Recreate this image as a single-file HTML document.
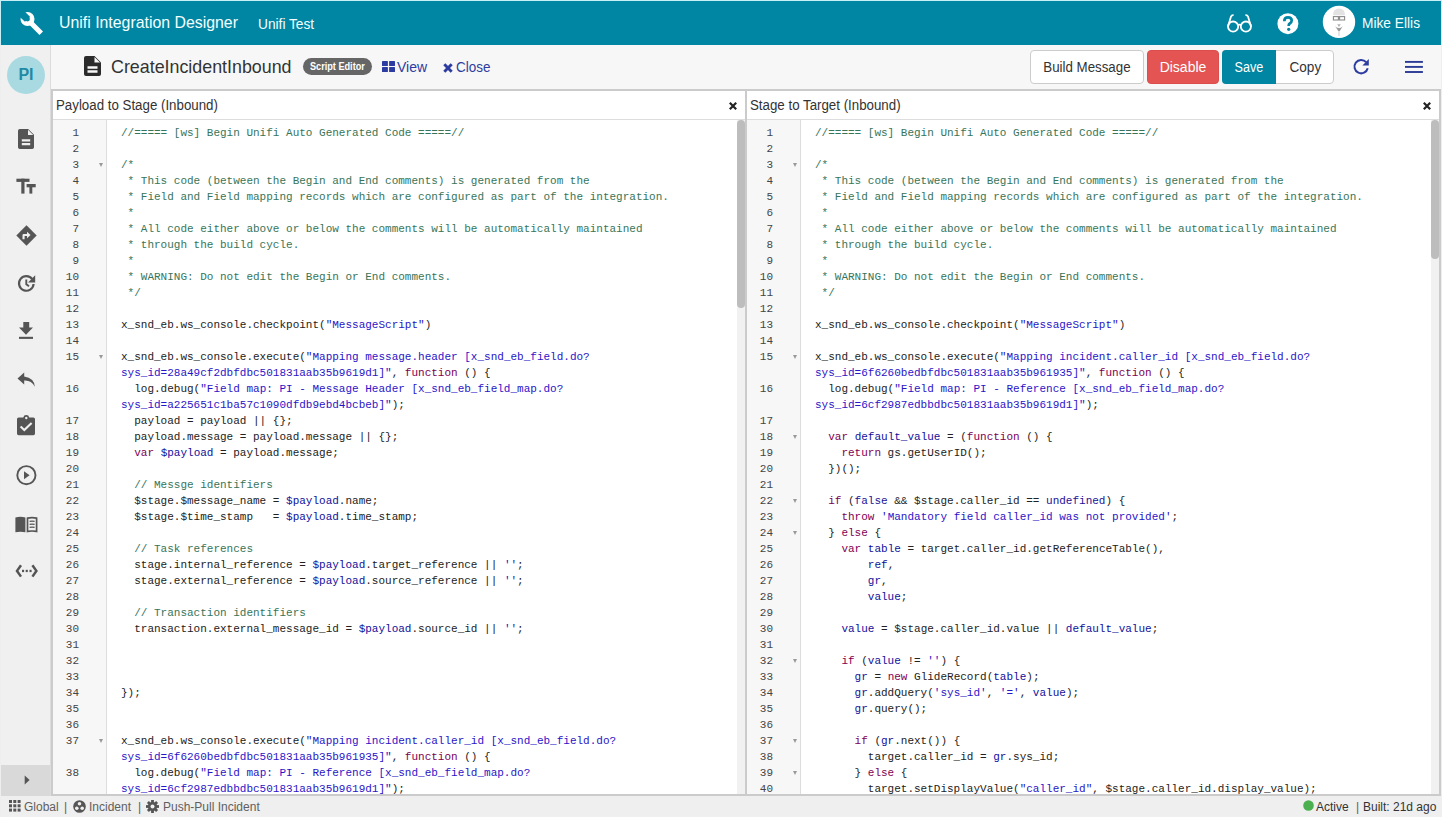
<!DOCTYPE html>
<html><head><meta charset="utf-8">
<style>
*{margin:0;padding:0;box-sizing:border-box}
html,body{width:1442px;height:817px;overflow:hidden}
body{position:relative;background:#eeeeee;font-family:"Liberation Sans",sans-serif;color:#333}
.abs{position:absolute}
#hdr{position:absolute;left:1px;top:1px;width:1440px;height:44px;background:#0085a3;color:#fff}
#hdr .t1{position:absolute;left:58px;top:12px;font-size:17px;white-space:nowrap;color:#f4ffff;transform:scaleX(0.933);transform-origin:0 0}
#hdr .t2{position:absolute;left:257px;top:15px;font-size:14px;white-space:nowrap;color:#f4ffff;transform:scaleX(0.98);transform-origin:0 0}
#hdr .user{position:absolute;left:1361px;top:13px;font-size:15px;white-space:nowrap;color:#f4ffff;transform:scaleX(0.916);transform-origin:0 0}
#side{position:absolute;left:1px;top:45px;width:50px;height:751px;background:#f0f0f0;border-right:1px solid #dcdcdc}
#side .exp{position:absolute;left:0;top:720px;width:49px;height:31px;background:#d9d9d9}
#tool{position:absolute;left:51px;top:45px;width:1390px;height:44px;background:#f7f7f7}
.btn{position:absolute;top:50px;height:34px;font-size:14px;line-height:32px;text-align:center;white-space:nowrap}
.pb{position:absolute;background:#cbcbcb}
.ph{position:absolute;top:91px;height:29px;background:#fff;border-bottom:1px solid #dddddd}
.ph .tt{position:absolute;left:3px;top:6px;font-size:14px;color:#333;white-space:nowrap;transform:scaleX(0.95);transform-origin:0 0}
.gut{position:absolute;top:120px;height:674px;background:#f7f7f7;border-right:1px solid #dddddd;overflow:hidden}
.code{position:absolute;top:120px;height:674px;background:#fff;overflow:hidden}
.rows{position:absolute;left:0;top:5px;right:0;bottom:0}
.ln{position:absolute;right:27px;height:16px;line-height:16px;font-family:"Liberation Mono",monospace;font-size:11px;color:#444;text-align:right}
.fold{position:absolute;left:46px;margin-top:6px;width:0;height:0;border-left:2.5px solid transparent;border-right:2.5px solid transparent;border-top:4px solid #999}
.cl{position:absolute;left:14px;height:16px;line-height:16px;font-family:"Liberation Mono",monospace;font-size:11px;color:#222;white-space:pre}
.com{color:#37755a}
.str{color:#2a14c8}
.kw{color:#7f0055}
.v2{color:#10109c}
.atom{color:#221199}
.sb{position:absolute;background:#f1f1f1}
.thumb{position:absolute;background:#bdbdbd;border-radius:4px}
#status{position:absolute;left:1px;top:796px;width:1440px;height:21px;background:#efefef;font-size:12px;color:#606060;white-space:nowrap}
#status span{position:absolute;top:4px}
svg{position:absolute;overflow:visible}
</style></head><body>

<div class="abs" style="left:0;top:0;width:1442px;height:45px;background:#c8eef6"></div>
<div id="hdr">
  <svg style="left:16.7px;top:8.7px" width="26" height="26" viewBox="0 0 26 26"><g fill="#fff"><circle cx="9.5" cy="9" r="7"/><path d="M8 11.5L11.5 8 25 21.5 21.5 25z"/></g><path fill="#0085a3" d="M1 6.2L6.2 1 12 6.8 7 11.8z"/><circle cx="9.5" cy="9" r="2.4" fill="#0085a3"/></svg>
  <div class="t1">Unifi Integration Designer</div>
  <div class="t2">Unifi Test</div>
  <svg style="left:1226px;top:13.3px" width="25" height="19" viewBox="0 0 25 19"><g fill="none" stroke="#fff" stroke-width="1.8"><circle cx="6.1" cy="12.6" r="5.1"/><circle cx="18.9" cy="12.6" r="5.1"/><path d="M10.8 11.3Q12.5 10 14.2 11.3"/><path d="M1 12.6L4 2.6Q4.6 1 6.6 1.2"/><path d="M24 12.6L21 2.6Q20.4 1 18.4 1.2"/></g></svg>
  <svg style="left:1276px;top:11.8px" width="22" height="22" viewBox="0 0 22 22"><circle cx="10.9" cy="10.7" r="10.5" fill="#fff"/><path d="M7.3 8.2Q7.3 4.4 11 4.4 14.7 4.4 14.7 7.6 14.7 9.4 12.8 10.5 11.7 11.2 11.7 12.4V13" fill="none" stroke="#0085a3" stroke-width="2.7"/><circle cx="11.7" cy="16.3" r="1.6" fill="#0085a3"/></svg>
  <svg style="left:1321px;top:4.3px" width="34" height="34" viewBox="0 0 34 34"><circle cx="17" cy="16.9" r="16.2" fill="#fff"/><path d="M11 10.2Q11 3.4 17 3.4 23 3.4 23 10.2z" fill="#e2e2e2"/><g fill="none" stroke="#8a8a8a" stroke-width="1.1"><rect x="11.4" y="11.6" width="5" height="3.4"/><rect x="17.6" y="11.6" width="5" height="3.4"/></g><path d="M16.4 11.8H17.6" stroke="#8a8a8a" stroke-width="1.1"/><path d="M13.2 21.2Q17 25 20.8 21.2L17 27.2z" fill="#9c9c9c"/><path d="M15.2 19.2H18.8L17 22z" fill="#b0b0b0"/><rect x="16" y="26" width="2" height="5" fill="#e6e6e6"/></svg>
  <div class="user">Mike Ellis</div>
</div>

<div id="side">
  <svg style="left:6px;top:11px" width="38" height="38" viewBox="0 0 38 38"><circle cx="19" cy="19" r="19" fill="#a9d9e1"/></svg>
  <div class="abs" style="left:0;top:21px;width:50px;text-align:center;font-size:16px;font-weight:bold;color:#1f8aa3">PI</div>
  <div class="exp"></div>

  <!-- sidebar icons (coords relative to #side: x-1, y-45) -->
  <svg style="left:17px;top:84px" width="16" height="20" viewBox="0 0 16 20"><path fill="#555" d="M1.8 0h8.4L16 5.8V18.2A1.8 1.8 0 0 1 14.2 20H1.8A1.8 1.8 0 0 1 0 18.2V1.8A1.8 1.8 0 0 1 1.8 0z"/><path fill="#f0f0f0" d="M10 .8v5.2h5.2z M3.8 10.2h8.4v2.4H3.8z M3.8 13.9h8.4v2.4H3.8z"/></svg>
  <svg style="left:15px;top:133px" width="20" height="16" viewBox="0 0 20 16"><g fill="#555"><rect x="0.4" y="0.7" width="13.1" height="3.2"/><rect x="5.3" y="0.7" width="3.2" height="14.9"/><rect x="10.6" y="6" width="9.1" height="3.3"/><rect x="13.4" y="6" width="2.9" height="9.6"/></g></svg>
  <svg style="left:15px;top:180px" width="21" height="21" viewBox="0 0 21 21"><path fill="#555" d="M10.5 0.3L20.7 10.5 10.5 20.7 0.3 10.5z"/><path fill="#f0f0f0" d="M6.5 14.3V10.3Q6.5 9 7.8 9H11V6.8L14.6 10 11 13.2V11H8.6V14.3z"/></svg>
  <svg style="left:16px;top:229px" width="19" height="19" viewBox="0 0 19 19"><path d="M15.3 5.2A7.3 7.3 0 1 0 16.6 10" fill="none" stroke="#555" stroke-width="2.2"/><path fill="#555" d="M18.2 1.2V8.4H11z"/><path d="M9.3 5.6V10.2L12 12.3" fill="none" stroke="#555" stroke-width="1.9"/></svg>
  <svg style="left:18px;top:277px" width="14" height="18" viewBox="0 0 14 18"><g fill="#555"><rect x="4.3" y="0" width="5.9" height="6"/><path d="M0 5.6H14L7 12.8z"/><rect x="0" y="14.8" width="14" height="2.1"/></g></svg>
  <svg style="left:16px;top:327px" width="19" height="15" viewBox="0 0 19 15"><path fill="#555" d="M7.2 0.4L0.5 6.4 7.2 12.6V8.6Q14.5 8.2 17.8 14.8 17.4 6.2 7.2 4.6z"/></svg>
  <svg style="left:16px;top:370px" width="19" height="21" viewBox="0 0 19 21"><path fill="#555" d="M1.6 2.4H6.3A3 3 0 0 1 12.2 2.4H16.4A1.6 1.6 0 0 1 18 4V18.6A1.6 1.6 0 0 1 16.4 20.2H1.6A1.6 1.6 0 0 1 0 18.6V4A1.6 1.6 0 0 1 1.6 2.4z"/><circle cx="9.3" cy="3" r="1.2" fill="#f0f0f0"/><path d="M3.6 11.6L7.3 15 14.6 8" fill="none" stroke="#f0f0f0" stroke-width="2.1"/></svg>
  <svg style="left:15px;top:420px" width="21" height="21" viewBox="0 0 21 21"><circle cx="10.4" cy="10.2" r="9.1" fill="none" stroke="#555" stroke-width="1.9"/><path fill="#555" d="M8 6.2V14.2L13.6 10.2z"/></svg>
  <svg style="left:14px;top:471px" width="23" height="17" viewBox="0 0 23 17"><path fill="#555" d="M0.4 1.4Q5.4 0.2 10.4 1.4V16.2Q5.4 15.4 0.4 16.2z"/><path fill="#f0f0f0" stroke="#555" stroke-width="1.7" d="M12.5 2.1Q17 1 21.6 2.1V15.4Q17 14.6 12.5 15.4z"/><g fill="none" stroke="#555" stroke-width="1.3"><path d="M14.6 5.4Q17 4.8 19.6 5.4"/><path d="M14.6 8.4Q17 7.8 19.6 8.4"/><path d="M14.6 11.4Q17 10.8 19.6 11.4"/></g></svg>
  <svg style="left:14px;top:519px" width="24" height="14" viewBox="0 0 24 14"><g fill="none" stroke="#555" stroke-width="2.5"><path d="M6 1.2L2 6.9 6 12.6"/><path d="M17.4 1.2L21.4 6.9 17.4 12.6"/></g><g fill="#555"><rect x="7" y="5.8" width="2.1" height="2.3"/><rect x="10.7" y="5.8" width="2.1" height="2.3"/><rect x="14.5" y="5.8" width="2.1" height="2.3"/></g></svg>
  <svg style="left:23px;top:730px" width="7" height="10" viewBox="0 0 7 10"><path fill="#555" d="M0.7 0.6V9.4L5.6 5z"/></svg>
</div>

<div id="tool"></div>

<!-- toolbar -->
<svg style="left:84px;top:56px" width="17" height="20" viewBox="0 0 17 20"><path fill="#2b2b2b" d="M2 0h8.5l6.5 6.5V18a2 2 0 0 1-2 2H2a2 2 0 0 1-2-2V2a2 2 0 0 1 2-2z"/><path fill="#f7f7f7" d="M10.5 1v5.5H16z M3.5 10.3h10v2.4h-10z M3.5 14.3h10v2.4h-10z"/></svg>
<div class="abs" style="left:111px;top:56px;font-size:19px;color:#333;white-space:nowrap;transform:scaleX(0.939);transform-origin:0 0">CreateIncidentInbound</div>
<div class="abs" style="left:303px;top:58px;width:69px;height:17px;background:#666;border-radius:9px"></div><div class="abs" style="left:310px;top:58px;color:#fff;font-size:10.5px;font-weight:bold;line-height:17px;white-space:nowrap;transform:scaleX(0.87);transform-origin:0 0">Script Editor</div>
<svg style="left:381.5px;top:61px" width="13" height="11" viewBox="0 0 13 11"><g fill="#2d3ca0"><rect x="0" y="0" width="5.9" height="4.9" rx=".5"/><rect x="7.1" y="0" width="5.9" height="4.9" rx=".5"/><rect x="0" y="6.1" width="5.9" height="4.9" rx=".5"/><rect x="7.1" y="6.1" width="5.9" height="4.9" rx=".5"/></g></svg>
<div class="abs" style="left:397px;top:59px;font-size:14px;color:#2d3ca0;white-space:nowrap">View</div>
<svg style="left:443px;top:62.5px" width="10" height="10" viewBox="0 0 10 10"><path d="M1.3 1.3L8.7 8.7M8.7 1.3L1.3 8.7" stroke="#2d3ca0" stroke-width="2.9"/></svg>
<div class="abs" style="left:456px;top:59px;font-size:14px;color:#2d3ca0;white-space:nowrap;transform:scaleX(0.96);transform-origin:0 0">Close</div>

<div class="btn" style="left:1030px;width:114px;background:#fff;border:1px solid #cccccc;border-radius:4px;color:#333"><span style="display:inline-block;transform:scaleX(0.95)">Build Message</span></div>
<div class="btn" style="left:1147px;width:72px;background:#e35453;border:1px solid #dc4e4d;border-radius:4px;color:#fff">Disable</div>
<div class="btn" style="left:1222px;width:112px;background:#fff;border:1px solid #cccccc;border-radius:4px"></div>
<div class="btn" style="left:1222px;width:54px;background:#0085a3;border-radius:4px 0 0 4px;color:#fff;line-height:34px"><span style="display:inline-block;transform:scaleX(0.9)">Save</span></div>
<div class="btn" style="left:1276px;width:58px;color:#333;line-height:34px"><span style="display:inline-block;transform:scaleX(0.97)">Copy</span></div>
<svg style="left:1352px;top:58.3px" width="19" height="17" viewBox="0 0 19 17"><path d="M14.2 4.2A6.7 6.7 0 1 0 15.7 10.2" fill="none" stroke="#2d3ca0" stroke-width="2"/><path d="M16.8 1 L16.8 7.6 L10.4 7.6Z" fill="#2d3ca0"/></svg>
<svg style="left:1405px;top:60px" width="18" height="14" viewBox="0 0 18 14"><g fill="#2a3a96"><rect x="0" y="0.95" width="17.9" height="1.9"/><rect x="0" y="5.95" width="17.9" height="1.9"/><rect x="0" y="11.05" width="17.9" height="1.9"/></g></svg>

<!-- panel borders -->
<div class="pb" style="left:51px;top:89px;width:1390px;height:2px"></div>
<div class="pb" style="left:51px;top:89px;width:2px;height:707px"></div>
<div class="pb" style="left:745px;top:89px;width:2px;height:707px"></div>
<div class="pb" style="left:1439px;top:89px;width:2px;height:707px"></div>
<div class="pb" style="left:51px;top:794px;width:1390px;height:2px"></div>

<!-- left panel -->
<div class="ph" style="left:53px;width:692px"><div class="tt">Payload to Stage (Inbound)</div>
<svg style="left:676px;top:11px" width="8" height="8" viewBox="0 0 8 8"><path d="M.8 .8L7.2 7.2M7.2 .8L.8 7.2" stroke="#222" stroke-width="2.2"/></svg></div>
<div class="gut" style="left:53px;width:54px"><div class="rows">
<div class="ln" style="top:0px">1</div>
<div class="ln" style="top:16px">2</div>
<div class="ln" style="top:32px">3</div>
<div class="fold" style="top:32px"></div>
<div class="ln" style="top:48px">4</div>
<div class="ln" style="top:64px">5</div>
<div class="ln" style="top:80px">6</div>
<div class="ln" style="top:96px">7</div>
<div class="ln" style="top:112px">8</div>
<div class="ln" style="top:128px">9</div>
<div class="ln" style="top:144px">10</div>
<div class="ln" style="top:160px">11</div>
<div class="ln" style="top:176px">12</div>
<div class="ln" style="top:192px">13</div>
<div class="ln" style="top:208px">14</div>
<div class="ln" style="top:224px">15</div>
<div class="fold" style="top:224px"></div>
<div class="ln" style="top:256px">16</div>
<div class="ln" style="top:288px">17</div>
<div class="ln" style="top:304px">18</div>
<div class="ln" style="top:320px">19</div>
<div class="ln" style="top:336px">20</div>
<div class="ln" style="top:352px">21</div>
<div class="ln" style="top:368px">22</div>
<div class="ln" style="top:384px">23</div>
<div class="ln" style="top:400px">24</div>
<div class="ln" style="top:416px">25</div>
<div class="ln" style="top:432px">26</div>
<div class="ln" style="top:448px">27</div>
<div class="ln" style="top:464px">28</div>
<div class="ln" style="top:480px">29</div>
<div class="ln" style="top:496px">30</div>
<div class="ln" style="top:512px">31</div>
<div class="ln" style="top:528px">32</div>
<div class="ln" style="top:544px">33</div>
<div class="ln" style="top:560px">34</div>
<div class="ln" style="top:576px">35</div>
<div class="ln" style="top:592px">36</div>
<div class="ln" style="top:608px">37</div>
<div class="fold" style="top:608px"></div>
<div class="ln" style="top:640px">38</div>
<div class="ln" style="top:672px">39</div>
</div></div>
<div class="code" style="left:107px;width:638px"><div class="rows">
<div class="cl" style="top:0px"><span class="com">//===== [ws] Begin Unifi Auto Generated Code =====//</span></div>
<div class="cl" style="top:16px"></div>
<div class="cl" style="top:32px"><span class="com">/*</span></div>
<div class="cl" style="top:48px"><span class="com"> * This code (between the Begin and End comments) is generated from the</span></div>
<div class="cl" style="top:64px"><span class="com"> * Field and Field mapping records which are configured as part of the integration.</span></div>
<div class="cl" style="top:80px"><span class="com"> *</span></div>
<div class="cl" style="top:96px"><span class="com"> * All code either above or below the comments will be automatically maintained</span></div>
<div class="cl" style="top:112px"><span class="com"> * through the build cycle.</span></div>
<div class="cl" style="top:128px"><span class="com"> *</span></div>
<div class="cl" style="top:144px"><span class="com"> * WARNING: Do not edit the Begin or End comments.</span></div>
<div class="cl" style="top:160px"><span class="com"> */</span></div>
<div class="cl" style="top:176px"></div>
<div class="cl" style="top:192px">x_snd_eb.ws_console.checkpoint(<span class="str">&quot;MessageScript&quot;</span>)</div>
<div class="cl" style="top:208px"></div>
<div class="cl" style="top:224px">x_snd_eb.ws_console.execute(<span class="str">&quot;Mapping message.header [x_snd_eb_field.do?</span></div>
<div class="cl" style="top:240px"><span class="str">sys_id=28a49cf2dbfdbc501831aab35b9619d1]&quot;</span>, <span class="kw">function</span> () {</div>
<div class="cl" style="top:256px">  log.debug(<span class="str">&quot;Field map: PI - Message Header [x_snd_eb_field_map.do?</span></div>
<div class="cl" style="top:272px"><span class="str">sys_id=a225651c1ba57c1090dfdb9ebd4bcbeb]&quot;</span>);</div>
<div class="cl" style="top:288px">  payload = payload || {};</div>
<div class="cl" style="top:304px">  payload.message = payload.message || {};</div>
<div class="cl" style="top:320px">  <span class="kw">var</span> <span class="v2">$payload</span> = payload.message;</div>
<div class="cl" style="top:336px"></div>
<div class="cl" style="top:352px">  <span class="com">// Messge identifiers</span></div>
<div class="cl" style="top:368px">  $stage.$message_name = <span class="v2">$payload</span>.name;</div>
<div class="cl" style="top:384px">  $stage.$time_stamp   = <span class="v2">$payload</span>.time_stamp;</div>
<div class="cl" style="top:400px"></div>
<div class="cl" style="top:416px">  <span class="com">// Task references</span></div>
<div class="cl" style="top:432px">  stage.internal_reference = <span class="v2">$payload</span>.target_reference || <span class="str">&#x27;&#x27;</span>;</div>
<div class="cl" style="top:448px">  stage.external_reference = <span class="v2">$payload</span>.source_reference || <span class="str">&#x27;&#x27;</span>;</div>
<div class="cl" style="top:464px"></div>
<div class="cl" style="top:480px">  <span class="com">// Transaction identifiers</span></div>
<div class="cl" style="top:496px">  transaction.external_message_id = <span class="v2">$payload</span>.source_id || <span class="str">&#x27;&#x27;</span>;</div>
<div class="cl" style="top:512px"></div>
<div class="cl" style="top:528px"></div>
<div class="cl" style="top:544px"></div>
<div class="cl" style="top:560px">});</div>
<div class="cl" style="top:576px"></div>
<div class="cl" style="top:592px"></div>
<div class="cl" style="top:608px">x_snd_eb.ws_console.execute(<span class="str">&quot;Mapping incident.caller_id [x_snd_eb_field.do?</span></div>
<div class="cl" style="top:624px"><span class="str">sys_id=6f6260bedbfdbc501831aab35b961935]&quot;</span>, <span class="kw">function</span> () {</div>
<div class="cl" style="top:640px">  log.debug(<span class="str">&quot;Field map: PI - Reference [x_snd_eb_field_map.do?</span></div>
<div class="cl" style="top:656px"><span class="str">sys_id=6cf2987edbbdbc501831aab35b9619d1]&quot;</span>);</div>
<div class="cl" style="top:672px">  <span class="kw">var</span> </div>
</div>
<div class="sb" style="left:630px;top:0;width:8px;height:674px"></div>
<div class="thumb" style="left:630px;top:0;width:8px;height:188px"></div>
</div>

<!-- right panel -->
<div class="ph" style="left:747px;width:692px"><div class="tt">Stage to Target (Inbound)</div>
<svg style="left:676px;top:11px" width="8" height="8" viewBox="0 0 8 8"><path d="M.8 .8L7.2 7.2M7.2 .8L.8 7.2" stroke="#222" stroke-width="2.2"/></svg></div>
<div class="gut" style="left:747px;width:54px"><div class="rows">
<div class="ln" style="top:0px">1</div>
<div class="ln" style="top:16px">2</div>
<div class="ln" style="top:32px">3</div>
<div class="fold" style="top:32px"></div>
<div class="ln" style="top:48px">4</div>
<div class="ln" style="top:64px">5</div>
<div class="ln" style="top:80px">6</div>
<div class="ln" style="top:96px">7</div>
<div class="ln" style="top:112px">8</div>
<div class="ln" style="top:128px">9</div>
<div class="ln" style="top:144px">10</div>
<div class="ln" style="top:160px">11</div>
<div class="ln" style="top:176px">12</div>
<div class="ln" style="top:192px">13</div>
<div class="ln" style="top:208px">14</div>
<div class="ln" style="top:224px">15</div>
<div class="fold" style="top:224px"></div>
<div class="ln" style="top:256px">16</div>
<div class="ln" style="top:288px">17</div>
<div class="ln" style="top:304px">18</div>
<div class="fold" style="top:304px"></div>
<div class="ln" style="top:320px">19</div>
<div class="ln" style="top:336px">20</div>
<div class="ln" style="top:352px">21</div>
<div class="ln" style="top:368px">22</div>
<div class="fold" style="top:368px"></div>
<div class="ln" style="top:384px">23</div>
<div class="ln" style="top:400px">24</div>
<div class="fold" style="top:400px"></div>
<div class="ln" style="top:416px">25</div>
<div class="ln" style="top:432px">26</div>
<div class="ln" style="top:448px">27</div>
<div class="ln" style="top:464px">28</div>
<div class="ln" style="top:480px">29</div>
<div class="ln" style="top:496px">30</div>
<div class="ln" style="top:512px">31</div>
<div class="ln" style="top:528px">32</div>
<div class="fold" style="top:528px"></div>
<div class="ln" style="top:544px">33</div>
<div class="ln" style="top:560px">34</div>
<div class="ln" style="top:576px">35</div>
<div class="ln" style="top:592px">36</div>
<div class="ln" style="top:608px">37</div>
<div class="fold" style="top:608px"></div>
<div class="ln" style="top:624px">38</div>
<div class="ln" style="top:640px">39</div>
<div class="fold" style="top:640px"></div>
<div class="ln" style="top:656px">40</div>
<div class="ln" style="top:672px">41</div>
</div></div>
<div class="code" style="left:801px;width:638px"><div class="rows">
<div class="cl" style="top:0px"><span class="com">//===== [ws] Begin Unifi Auto Generated Code =====//</span></div>
<div class="cl" style="top:16px"></div>
<div class="cl" style="top:32px"><span class="com">/*</span></div>
<div class="cl" style="top:48px"><span class="com"> * This code (between the Begin and End comments) is generated from the</span></div>
<div class="cl" style="top:64px"><span class="com"> * Field and Field mapping records which are configured as part of the integration.</span></div>
<div class="cl" style="top:80px"><span class="com"> *</span></div>
<div class="cl" style="top:96px"><span class="com"> * All code either above or below the comments will be automatically maintained</span></div>
<div class="cl" style="top:112px"><span class="com"> * through the build cycle.</span></div>
<div class="cl" style="top:128px"><span class="com"> *</span></div>
<div class="cl" style="top:144px"><span class="com"> * WARNING: Do not edit the Begin or End comments.</span></div>
<div class="cl" style="top:160px"><span class="com"> */</span></div>
<div class="cl" style="top:176px"></div>
<div class="cl" style="top:192px">x_snd_eb.ws_console.checkpoint(<span class="str">&quot;MessageScript&quot;</span>)</div>
<div class="cl" style="top:208px"></div>
<div class="cl" style="top:224px">x_snd_eb.ws_console.execute(<span class="str">&quot;Mapping incident.caller_id [x_snd_eb_field.do?</span></div>
<div class="cl" style="top:240px"><span class="str">sys_id=6f6260bedbfdbc501831aab35b961935]&quot;</span>, <span class="kw">function</span> () {</div>
<div class="cl" style="top:256px">  log.debug(<span class="str">&quot;Field map: PI - Reference [x_snd_eb_field_map.do?</span></div>
<div class="cl" style="top:272px"><span class="str">sys_id=6cf2987edbbdbc501831aab35b9619d1]&quot;</span>);</div>
<div class="cl" style="top:288px"></div>
<div class="cl" style="top:304px">  <span class="kw">var</span> <span class="v2">default_value</span> = (<span class="kw">function</span> () {</div>
<div class="cl" style="top:320px">    <span class="kw">return</span> gs.getUserID();</div>
<div class="cl" style="top:336px">  })();</div>
<div class="cl" style="top:352px"></div>
<div class="cl" style="top:368px">  <span class="kw">if</span> (<span class="atom">false</span> &amp;&amp; $stage.caller_id == <span class="atom">undefined</span>) {</div>
<div class="cl" style="top:384px">    <span class="kw">throw</span> <span class="str">&#x27;Mandatory field caller_id was not provided&#x27;</span>;</div>
<div class="cl" style="top:400px">  } <span class="kw">else</span> {</div>
<div class="cl" style="top:416px">    <span class="kw">var</span> <span class="v2">table</span> = target.caller_id.getReferenceTable(),</div>
<div class="cl" style="top:432px">        <span class="v2">ref</span>,</div>
<div class="cl" style="top:448px">        <span class="v2">gr</span>,</div>
<div class="cl" style="top:464px">        <span class="v2">value</span>;</div>
<div class="cl" style="top:480px"></div>
<div class="cl" style="top:496px">    <span class="v2">value</span> = $stage.caller_id.value || <span class="v2">default_value</span>;</div>
<div class="cl" style="top:512px"></div>
<div class="cl" style="top:528px">    <span class="kw">if</span> (<span class="v2">value</span> != <span class="str">&#x27;&#x27;</span>) {</div>
<div class="cl" style="top:544px">      <span class="v2">gr</span> = <span class="kw">new</span> GlideRecord(<span class="v2">table</span>);</div>
<div class="cl" style="top:560px">      <span class="v2">gr</span>.addQuery(<span class="str">&#x27;sys_id&#x27;</span>, <span class="str">&#x27;=&#x27;</span>, <span class="v2">value</span>);</div>
<div class="cl" style="top:576px">      <span class="v2">gr</span>.query();</div>
<div class="cl" style="top:592px"></div>
<div class="cl" style="top:608px">      <span class="kw">if</span> (<span class="v2">gr</span>.next()) {</div>
<div class="cl" style="top:624px">        target.caller_id = <span class="v2">gr</span>.sys_id;</div>
<div class="cl" style="top:640px">      } <span class="kw">else</span> {</div>
<div class="cl" style="top:656px">        target.setDisplayValue(<span class="str">&quot;caller_id&quot;</span>, $stage.caller_id.display_value);</div>
<div class="cl" style="top:672px">        </div>
</div>
<div class="sb" style="left:630px;top:0;width:8px;height:674px"></div>
<div class="thumb" style="left:630px;top:0;width:8px;height:139px"></div>
</div>

<div id="status">
  <svg style="left:8px;top:4px" width="12" height="12" viewBox="0 0 12 12"><g fill="#555"><rect x="0" y="0" width="3" height="3"/><rect x="4.3" y="0" width="3" height="3"/><rect x="8.6" y="0" width="3" height="3"/><rect x="0" y="4.3" width="3" height="3"/><rect x="4.3" y="4.3" width="3" height="3"/><rect x="8.6" y="4.3" width="3" height="3"/><rect x="0" y="8.6" width="3" height="3"/><rect x="4.3" y="8.6" width="3" height="3"/><rect x="8.6" y="8.6" width="3" height="3"/></g></svg>
  <span style="left:23px">Global</span>
  <span style="left:63px">|</span>
  <svg style="left:72px;top:4px" width="13" height="13" viewBox="0 0 13 13"><circle cx="6.5" cy="6.5" r="6.3" fill="#555"/><circle cx="6.5" cy="3.7" r="1.8" fill="#efefef"/><circle cx="3.8" cy="8.3" r="1.8" fill="#efefef"/><circle cx="9.2" cy="8.3" r="1.8" fill="#efefef"/></svg>
  <span style="left:88px">Incident</span>
  <span style="left:137px">|</span>
  <svg style="left:145px;top:4px" width="13" height="13" viewBox="0 0 13 13"><g fill="#555" transform="translate(6.5 6.5)"><circle r="4.6"/><rect x="-1.4" y="-6.5" width="2.8" height="13"/><rect x="-1.4" y="-6.5" width="2.8" height="13" transform="rotate(45)"/><rect x="-1.4" y="-6.5" width="2.8" height="13" transform="rotate(90)"/><rect x="-1.4" y="-6.5" width="2.8" height="13" transform="rotate(135)"/></g><circle cx="6.5" cy="6.5" r="2" fill="#efefef"/></svg>
  <span style="left:162px">Push-Pull Incident</span>
  <svg style="left:1302px;top:4px" width="11" height="11" viewBox="0 0 11 11"><circle cx="5.5" cy="5.5" r="5.3" fill="#4caf50"/></svg>
  <span style="left:1315px;color:#333">Active</span>
  <span style="left:1355px">|</span>
  <span style="left:1362px;color:#333">Built: 21d ago</span>
</div>

</body></html>
